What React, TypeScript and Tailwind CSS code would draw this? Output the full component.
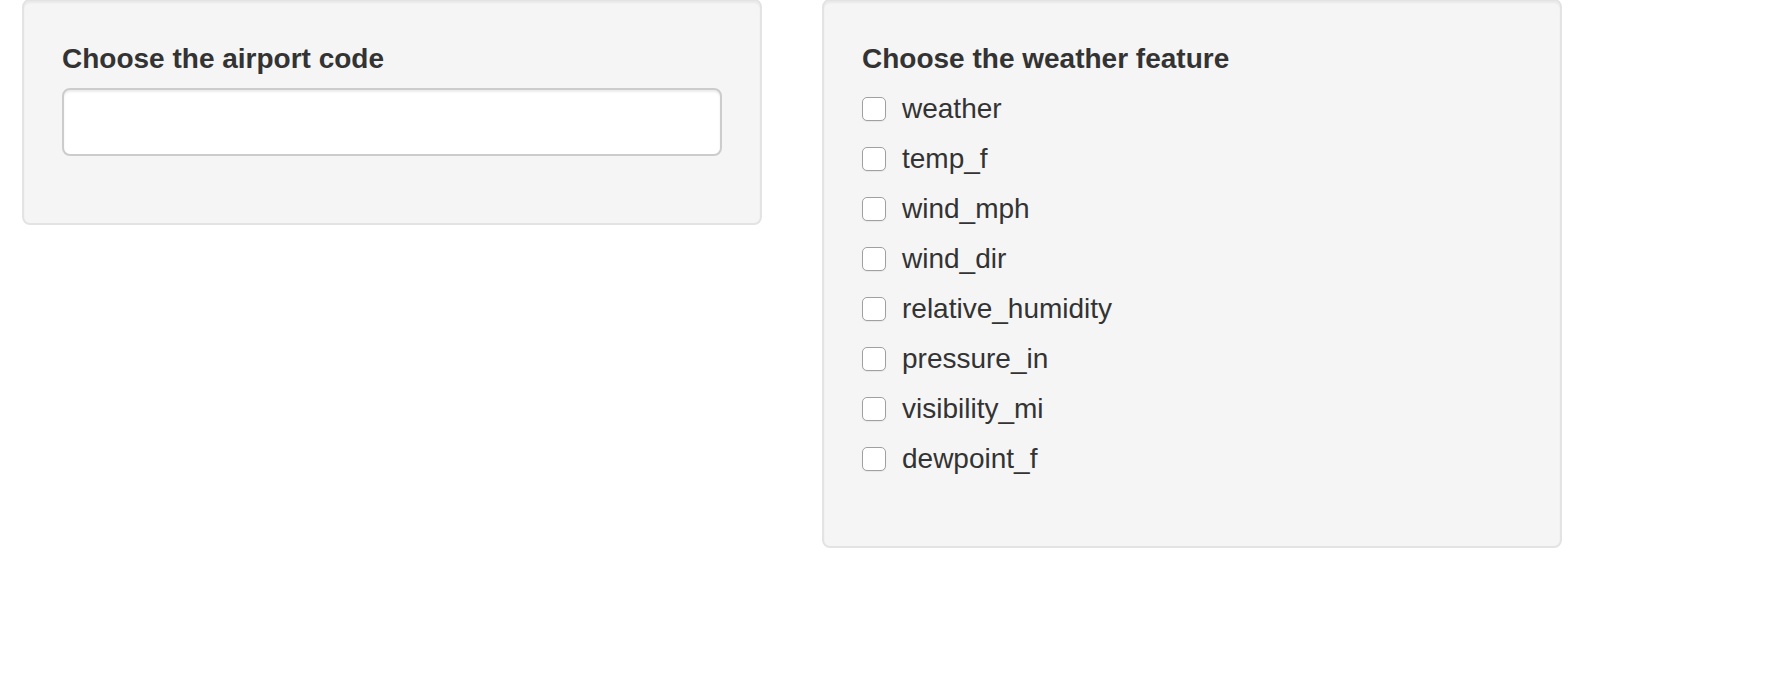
import React from "react";

const features = [
  "weather",
  "temp_f",
  "wind_mph",
  "wind_dir",
  "relative_humidity",
  "pressure_in",
  "visibility_mi",
  "dewpoint_f",
];

function Well({ children }: { children: React.ReactNode }) {
  return (
    <div className="w-[740px] shrink-0 rounded-[8px] border-2 border-[#e3e3e3] bg-[#f5f5f5] p-[38px] shadow-[inset_0_2px_2px_rgba(0,0,0,0.05)]">
      {children}
    </div>
  );
}

export default function App() {
  return (
    <div
      className="min-h-[696px] w-full bg-white text-[#333]"
      style={{ fontFamily: '"Liberation Sans", Arial, Helvetica, sans-serif' }}
    >
      <div className="-mt-[1px] flex items-start gap-[60px] pl-[22px]">
        <Well>
          <div className="mb-[29px]">
            <label className="mb-[9px] block text-[28px] font-bold leading-[40px]">
              Choose the airport code
            </label>
            <input
              type="text"
              className="block h-[68px] w-full rounded-[8px] border-2 border-[#cccccc] bg-white px-[24px] text-[28px] shadow-[inset_0_2px_2px_rgba(0,0,0,0.075)] outline-none"
            />
          </div>
        </Well>
        <Well>
          <div className="mb-[29px]">
            <label className="mb-[10px] block text-[28px] font-bold leading-[40px]">
              Choose the weather feature
            </label>
            <div className="flex flex-col gap-[10px]">
              {features.map((f) => (
                <label key={f} className="flex h-[40px] items-start">
                  <span className="mt-[8px] block h-[24px] w-[24px] shrink-0 rounded-[5px] border border-[#a0a0a0] bg-white shadow-[0_1px_1px_rgba(0,0,0,0.06)]" />
                  <span className="ml-[16px] text-[28px] leading-[40px]">{f}</span>
                </label>
              ))}
            </div>
          </div>
        </Well>
      </div>
    </div>
  );
}
